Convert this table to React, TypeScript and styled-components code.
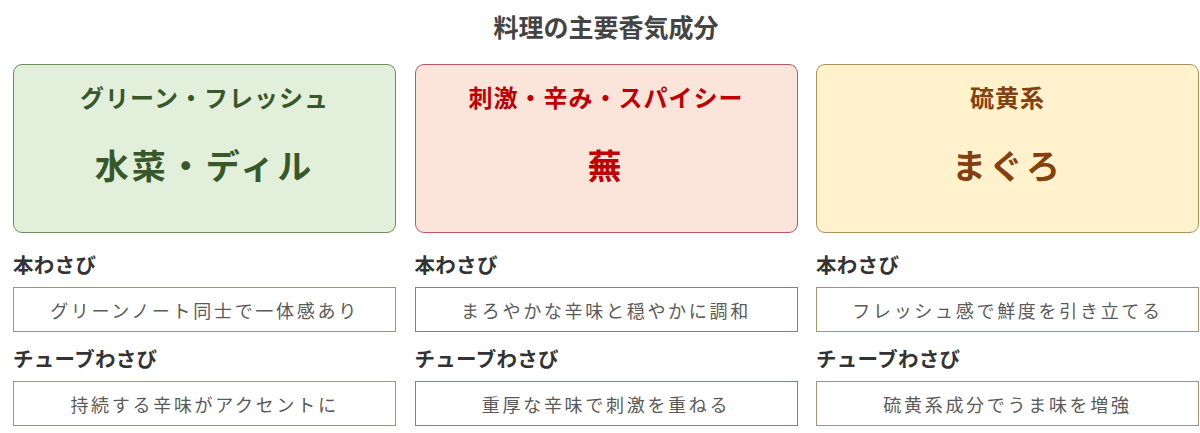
import React from 'react';
import styled, { createGlobalStyle } from 'styled-components';

type Tone = {
  bg: string;
  border: string;
  text: string;
  box: string;
};

const tones: Record<string, Tone> = {
  green: { bg: '#e2efda', border: '#6f8b5c', text: '#38582a', box: '#8c9c7c' },
  red: { bg: '#fbe5da', border: '#c05566', text: '#c00000', box: '#c3607a' },
  yellow: { bg: '#fff2cc', border: '#a8925a', text: '#84400f', box: '#a89565' },
};

const GlobalStyle = createGlobalStyle`
  body {
    margin: 0;
    background: #ffffff;
    font-family: "Noto Sans CJK JP", "Noto Sans", sans-serif;
  }
`;

const Page = styled.div`
  width: 1186px;
  padding: 8px 0 0 13px;
`;

const Title = styled.h1`
  margin: 0 0 20px;
  font-size: 25px;
  line-height: 36px;
  font-weight: 700;
  color: #444444;
  text-align: center;
`;

const Columns = styled.div`
  display: grid;
  grid-template-columns: repeat(3, 1fr);
  column-gap: 18.5px;
`;

const Column = styled.section`
  display: flex;
  flex-direction: column;
`;

const Card = styled.div<{ $tone: Tone }>`
  height: 169px;
  box-sizing: border-box;
  border: 1px solid ${(p) => p.$tone.border};
  border-radius: 9px;
  background: ${(p) => p.$tone.bg};
  color: ${(p) => p.$tone.text};
  display: flex;
  flex-direction: column;
  align-items: center;
  padding-top: 16px;
`;

const Category = styled.div`
  font-size: 24px;
  line-height: 32px;
  font-weight: 700;
  letter-spacing: 1px;
`;

const Ingredient = styled.div`
  margin-top: 28px;
  font-size: 34px;
  line-height: 48px;
  font-weight: 700;
  letter-spacing: 3px;
`;

const Label = styled.div<{ $first?: boolean }>`
  margin-top: ${(p) => (p.$first ? '17px' : '12px')};
  font-size: 20.5px;
  line-height: 28px;
  font-weight: 700;
  letter-spacing: 0.3px;
  color: #333333;
`;

const Note = styled.div<{ $tone: Tone }>`
  margin-top: 9px;
  height: 45px;
  box-sizing: border-box;
  border: 1.5px solid ${(p) => p.$tone.box};
  background: #ffffff;
  display: flex;
  align-items: center;
  justify-content: center;
  font-size: 18px;
  letter-spacing: 2.7px;
  color: #5a5a5a;
`;

const data = [
  {
    tone: tones.green,
    category: 'グリーン・フレッシュ',
    ingredient: '水菜・ディル',
    hon: 'グリーンノート同士で一体感あり',
    tube: '持続する辛味がアクセントに',
  },
  {
    tone: tones.red,
    category: '刺激・辛み・スパイシー',
    ingredient: '蕪',
    hon: 'まろやかな辛味と穏やかに調和',
    tube: '重厚な辛味で刺激を重ねる',
  },
  {
    tone: tones.yellow,
    category: '硫黄系',
    ingredient: 'まぐろ',
    hon: 'フレッシュ感で鮮度を引き立てる',
    tube: '硫黄系成分でうま味を増強',
  },
];

export default function App() {
  return (
    <>
      <GlobalStyle />
      <Page>
        <Title>料理の主要香気成分</Title>
        <Columns>
          {data.map((d) => (
            <Column key={d.category}>
              <Card $tone={d.tone}>
                <Category>{d.category}</Category>
                <Ingredient>{d.ingredient}</Ingredient>
              </Card>
              <Label $first>本わさび</Label>
              <Note $tone={d.tone}>{d.hon}</Note>
              <Label>チューブわさび</Label>
              <Note $tone={d.tone}>{d.tube}</Note>
            </Column>
          ))}
        </Columns>
      </Page>
    </>
  );
}
